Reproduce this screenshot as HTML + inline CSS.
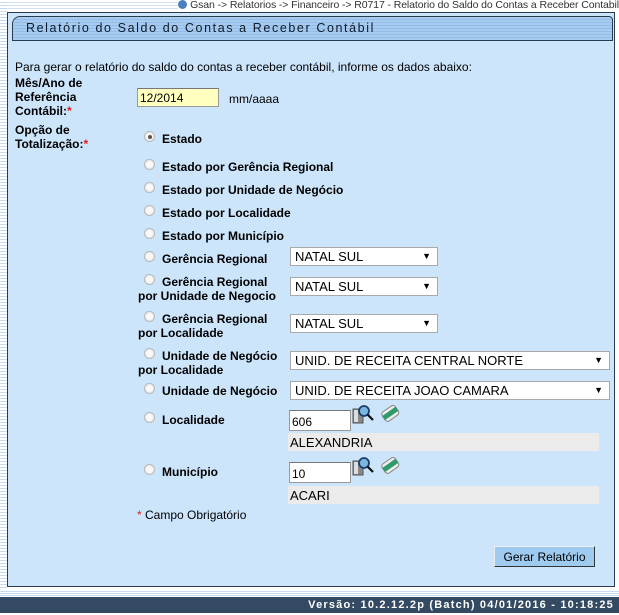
<!DOCTYPE html>
<html><head><meta charset="utf-8"><style>
*{margin:0;padding:0;box-sizing:border-box}
body{width:619px;height:615px;position:relative;background:#fff;font-family:"Liberation Sans",Arial,sans-serif;font-size:12px;color:#000;overflow:hidden}
.a{position:absolute;white-space:nowrap}
.b{font-weight:bold}
.lines{position:absolute;left:0;top:0;width:7px;height:592px;background:repeating-linear-gradient(#fff 0 2px,#c7d9ee 2px 3px)}
.top{position:absolute;left:0;top:0;width:619px;height:10px;background:repeating-linear-gradient(#fff 0 2px,#d3e1f0 2px 3px)}
.panel{position:absolute;left:7px;top:12px;width:608px;height:575px;background:#cce5fb;border:1px solid #2a3b4e}
.title{position:absolute;left:12px;top:16px;width:601px;height:25px;border:1px solid #2a3b4e;border-radius:8px 4px 0 0;background:repeating-linear-gradient(#a8ccf0 0 2px,#93bde8 2px 3px);font-size:12.5px;letter-spacing:1.6px;padding:4px 0 0 13px;color:#0d1a2a}
.r{position:absolute;width:11px;height:11px;border-radius:50%;background:radial-gradient(circle,#f8f8f8 40%,#dcdcdc 100%);border:1px solid #b9b9b9}
.r.on::after{content:"";position:absolute;left:2.5px;top:2.5px;width:4px;height:4px;border-radius:50%;background:#555}
.sel{position:absolute;height:19px;background:#fff;border:1px solid #a9a9a9;font-size:13px;padding:1px 0 0 4px}
.sel::after{content:"▼";position:absolute;right:6px;top:3px;font-size:9px}
.inp{position:absolute;background:#fff;border:1px solid #999;border-top-color:#777;font-size:12px;padding:4px 0 0 2px}
.desc{position:absolute;left:288px;width:311px;height:18px;background:#ebebeb;font-size:13px;padding:2px 0 0 2px}
.foot{position:absolute;left:0;top:597px;width:619px;height:16px;background:#334a62;color:#fff;font-weight:bold;font-size:11px;letter-spacing:1.2px;text-align:right;padding:2px 5px 0 0}
.footl{position:absolute;left:0;top:590px;width:619px;height:6px;background:repeating-linear-gradient(#fff 0 1px,#c9dcef 1px 2px)}
.btn{position:absolute;left:494px;top:546px;width:101px;height:21px;background:#9fcbf0;border:1px solid #333;border-top-color:#eee;border-left-color:#eee;font-size:12px;text-align:center;padding-top:3px}
.red{color:#e02020}
</style></head><body>
<div class="top"></div>
<div class="lines"></div>
<div class="a" style="right:0;top:-1px;font-size:10.5px;letter-spacing:-0.1px;color:#333;background:#fff"><span style="display:inline-block;width:9px;height:9px;border-radius:50%;background:#4a7fc0;vertical-align:-1px;margin-right:3px"></span>Gsan -&gt; Relatorios -&gt; Financeiro -&gt; R0717 - Relatorio do Saldo do Contas a Receber Contabil</div>
<div class="panel"></div>
<div class="title">Relatório do Saldo do Contas a Receber Contábil</div>

<div class="a" style="left:15px;top:60px">Para gerar o relatório do saldo do contas a receber contábil, informe os dados abaixo:</div>
<div class="a b" style="left:15px;top:76px;line-height:14px">Mês/Ano de<br>Referência<br>Contábil:<span class="red">*</span></div>
<div class="inp" style="left:137px;top:88px;width:82px;height:19px;background:#ffffc0;padding-top:2px">12/2014</div>
<div class="a" style="left:229px;top:92px">mm/aaaa</div>
<div class="a b" style="left:15px;top:123px;line-height:14px">Opção de<br>Totalização:<span class="red">*</span></div>

<div class="r on" style="left:144px;top:131px"></div><div class="a b" style="left:162px;top:132px">Estado</div>
<div class="r" style="left:144px;top:159px"></div><div class="a b" style="left:162px;top:160px">Estado por Gerência Regional</div>
<div class="r" style="left:144px;top:182px"></div><div class="a b" style="left:162px;top:183px">Estado por Unidade de Negócio</div>
<div class="r" style="left:144px;top:205px"></div><div class="a b" style="left:162px;top:206px">Estado por Localidade</div>
<div class="r" style="left:144px;top:228px"></div><div class="a b" style="left:162px;top:229px">Estado por Município</div>
<div class="r" style="left:144px;top:251px"></div><div class="a b" style="left:162px;top:252px">Gerência Regional</div>
<div class="sel" style="left:290px;top:247px;width:148px">NATAL SUL</div>
<div class="r" style="left:144px;top:274px"></div><div class="a b" style="left:162px;top:275px">Gerência Regional</div><div class="a b" style="left:138px;top:289px">por Unidade de Negocio</div>
<div class="sel" style="left:290px;top:277px;width:148px">NATAL SUL</div>
<div class="r" style="left:144px;top:311px"></div><div class="a b" style="left:162px;top:312px">Gerência Regional</div><div class="a b" style="left:138px;top:326px">por Localidade</div>
<div class="sel" style="left:290px;top:314px;width:148px">NATAL SUL</div>
<div class="r" style="left:144px;top:348px"></div><div class="a b" style="left:162px;top:349px">Unidade de Negócio</div><div class="a b" style="left:138px;top:363px">por Localidade</div>
<div class="sel" style="left:290px;top:351px;width:320px">UNID. DE RECEITA CENTRAL NORTE</div>
<div class="r" style="left:144px;top:383px"></div><div class="a b" style="left:162px;top:384px">Unidade de Negócio</div>
<div class="sel" style="left:290px;top:381px;width:320px">UNID. DE RECEITA JOAO CAMARA</div>

<div class="r" style="left:144px;top:412px"></div><div class="a b" style="left:162px;top:413px">Localidade</div>
<div class="inp" style="left:289px;top:410px;width:62px;height:21px">606</div>
<svg class="a" style="left:352px;top:403px" width="50" height="22" viewBox="0 0 50 22"><rect x="1" y="6" width="10" height="14" fill="#888" stroke="#555"/><rect x="2" y="7" width="4" height="12" fill="#ddd"/><circle cx="12" cy="8" r="5" fill="#7ab6e0" stroke="#1a3f6a" stroke-width="1.8"/><line x1="15.5" y1="11.5" x2="21" y2="17" stroke="#111" stroke-width="2.2"/><g transform="rotate(-35 38 10)"><rect x="30" y="5" width="16" height="11" rx="3" fill="#eee" stroke="#888"/><rect x="30" y="8" width="16" height="5" fill="#2f9a6a"/></g></svg>
<div class="desc" style="top:433px">ALEXANDRIA</div>

<div class="r" style="left:144px;top:464px"></div><div class="a b" style="left:162px;top:465px">Município</div>
<div class="inp" style="left:289px;top:462px;width:62px;height:21px">10</div>
<svg class="a" style="left:352px;top:455px" width="50" height="22" viewBox="0 0 50 22"><rect x="1" y="6" width="10" height="14" fill="#888" stroke="#555"/><rect x="2" y="7" width="4" height="12" fill="#ddd"/><circle cx="12" cy="8" r="5" fill="#7ab6e0" stroke="#1a3f6a" stroke-width="1.8"/><line x1="15.5" y1="11.5" x2="21" y2="17" stroke="#111" stroke-width="2.2"/><g transform="rotate(-35 38 10)"><rect x="30" y="5" width="16" height="11" rx="3" fill="#eee" stroke="#888"/><rect x="30" y="8" width="16" height="5" fill="#2f9a6a"/></g></svg>
<div class="desc" style="top:486px">ACARI</div>

<div class="a" style="left:137px;top:508px"><span class="red">*</span> Campo Obrigatório</div>
<div class="btn">Gerar Relatório</div>
<div class="footl"></div>
<div class="foot">Versão: 10.2.12.2p (Batch) 04/01/2016 - 10:18:25</div>
</body></html>
